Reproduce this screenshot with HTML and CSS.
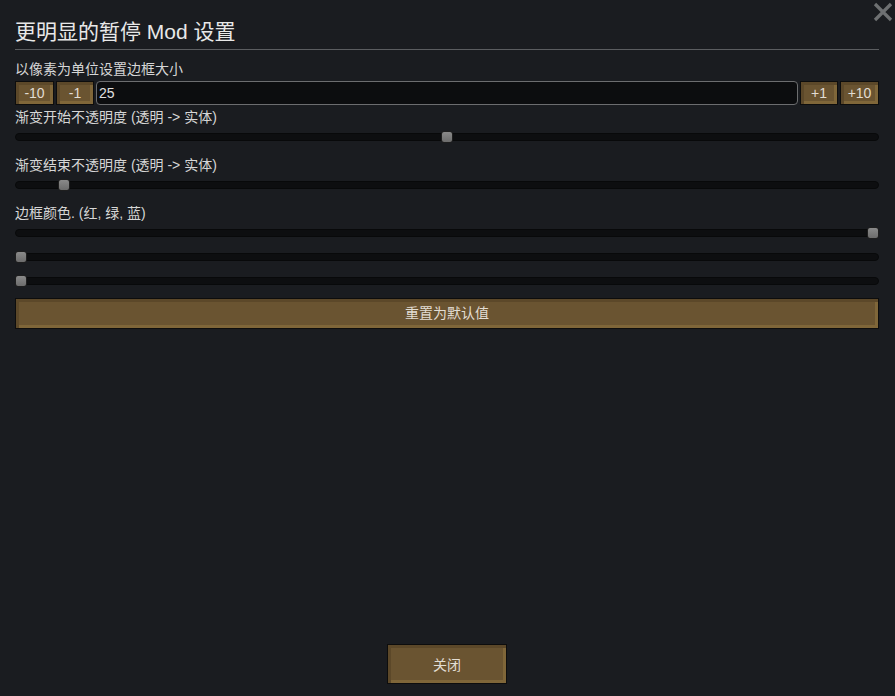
FILE: index.html
```html
<!DOCTYPE html>
<html lang="zh">
<head>
<meta charset="utf-8">
<link rel="stylesheet" href="styles.css">
</head>
<body>
<div class="window">
  <div class="close-x" aria-label="close">
    <svg width="20" height="20" viewBox="0 0 20 20"><path d="M2 2 L18 18 M18 2 L2 18" stroke="#6e7072" stroke-width="3.2" stroke-linecap="butt"/></svg>
  </div>
  <div class="content">
    <h1 class="title">更明显的暂停 Mod 设置</h1>
    <div class="label first">以像素为单位设置边框大小</div>
    <div class="num-row">
      <button class="btn small w38">-10</button>
      <button class="btn small w36">-1</button>
      <div class="field">25</div>
      <button class="btn small w36">+1</button>
      <button class="btn small w38">+10</button>
    </div>
    <div class="label">渐变开始不透明度 (透明 -&gt; 实体)</div>
    <div class="slider"><div class="track"></div><div class="thumb" style="--p: 0.5"></div></div>
    <div class="label">渐变结束不透明度 (透明 -&gt; 实体)</div>
    <div class="slider"><div class="track"></div><div class="thumb" style="--p: 0.05"></div></div>
    <div class="label">边框颜色. (红, 绿, 蓝)</div>
    <div class="slider"><div class="track"></div><div class="thumb" style="--p: 1"></div></div>
    <div class="slider"><div class="track"></div><div class="thumb" style="--p: 0"></div></div>
    <div class="slider"><div class="track"></div><div class="thumb" style="--p: 0"></div></div>
    <button class="btn reset">重置为默认值</button>
  </div>
  <div class="footer">
    <button class="btn close">关闭</button>
  </div>
</div>
</body>
</html>
```

FILE: styles.css
```css
* { box-sizing: border-box; }
html, body {
  margin: 0;
  padding: 0;
  width: 895px;
  height: 696px;
  background: #1a1c20;
  overflow: hidden;
}
body {
  font-family: "Liberation Sans", "Noto Sans CJK SC", sans-serif;
  color: #d6d6d6;
}
.window {
  position: relative;
  height: 696px;
  display: flex;
  flex-direction: column;
}
.close-x {
  position: absolute;
  top: 2px;
  right: 2px;
  width: 20px;
  height: 20px;
}
.close-x svg { display: block; }
.content {
  padding: 0 16px 0 15px;
  display: flex;
  flex-direction: column;
}
.title {
  margin: 0;
  padding-top: 18px;
  height: 50px;
  font-size: 21px;
  line-height: 28px;
  font-weight: normal;
  color: #e8e8e8;
  border-bottom: 1px solid #5b5d60;
}
.label {
  height: 24px;
  font-size: 14px;
  line-height: 24px;
  white-space: nowrap;
}
.label.first {
  margin-top: 7px;
}
.num-row {
  display: flex;
  gap: 2px;
  height: 24px;
}
.btn {
  font-family: "Liberation Sans", "Noto Sans CJK SC", sans-serif;
  font-size: 14px;
  color: #e2ddd3;
  background: #6a5431;
  border: 1px solid #0d0d0d;
  box-shadow: inset 3px 3px 0 #5c4829, inset -3px -3px 0 #7f6639;
  padding: 0;
  margin: 0;
  cursor: pointer;
}
.btn.small { height: 24px; line-height: 22px; }
.w38 { width: 39px; }
.w36 { width: 38px; }
.field {
  flex: 1;
  height: 24px;
  background: #0c0d0f;
  border: 1px solid #6c6d6f;
  border-radius: 4px;
  font-size: 14px;
  line-height: 22px;
  padding-left: 2px;
  color: #e0e0e0;
}
.slider {
  position: relative;
  height: 24px;
}
.track {
  position: absolute;
  left: 0;
  right: 0;
  top: 4px;
  height: 8px;
  background: #0d0e10;
  border: 1px solid #08090a;
  border-radius: 4px;
}
.thumb {
  position: absolute;
  top: 2px;
  left: calc(var(--p) * (100% - 12px));
  width: 12px;
  height: 12px;
  background: linear-gradient(#8a8a8a, #6c6c6c);
  border: 1px solid #1e1e1e;
  border-radius: 3px;
}
.reset {
  margin-top: 1px;
  height: 31px;
  width: 100%;
  line-height: 29px;
}
.footer {
  margin-top: auto;
  display: flex;
  justify-content: center;
  padding-bottom: 12px;
}
.close {
  width: 120px;
  height: 40px;
  margin-left: -1px;
}
```
